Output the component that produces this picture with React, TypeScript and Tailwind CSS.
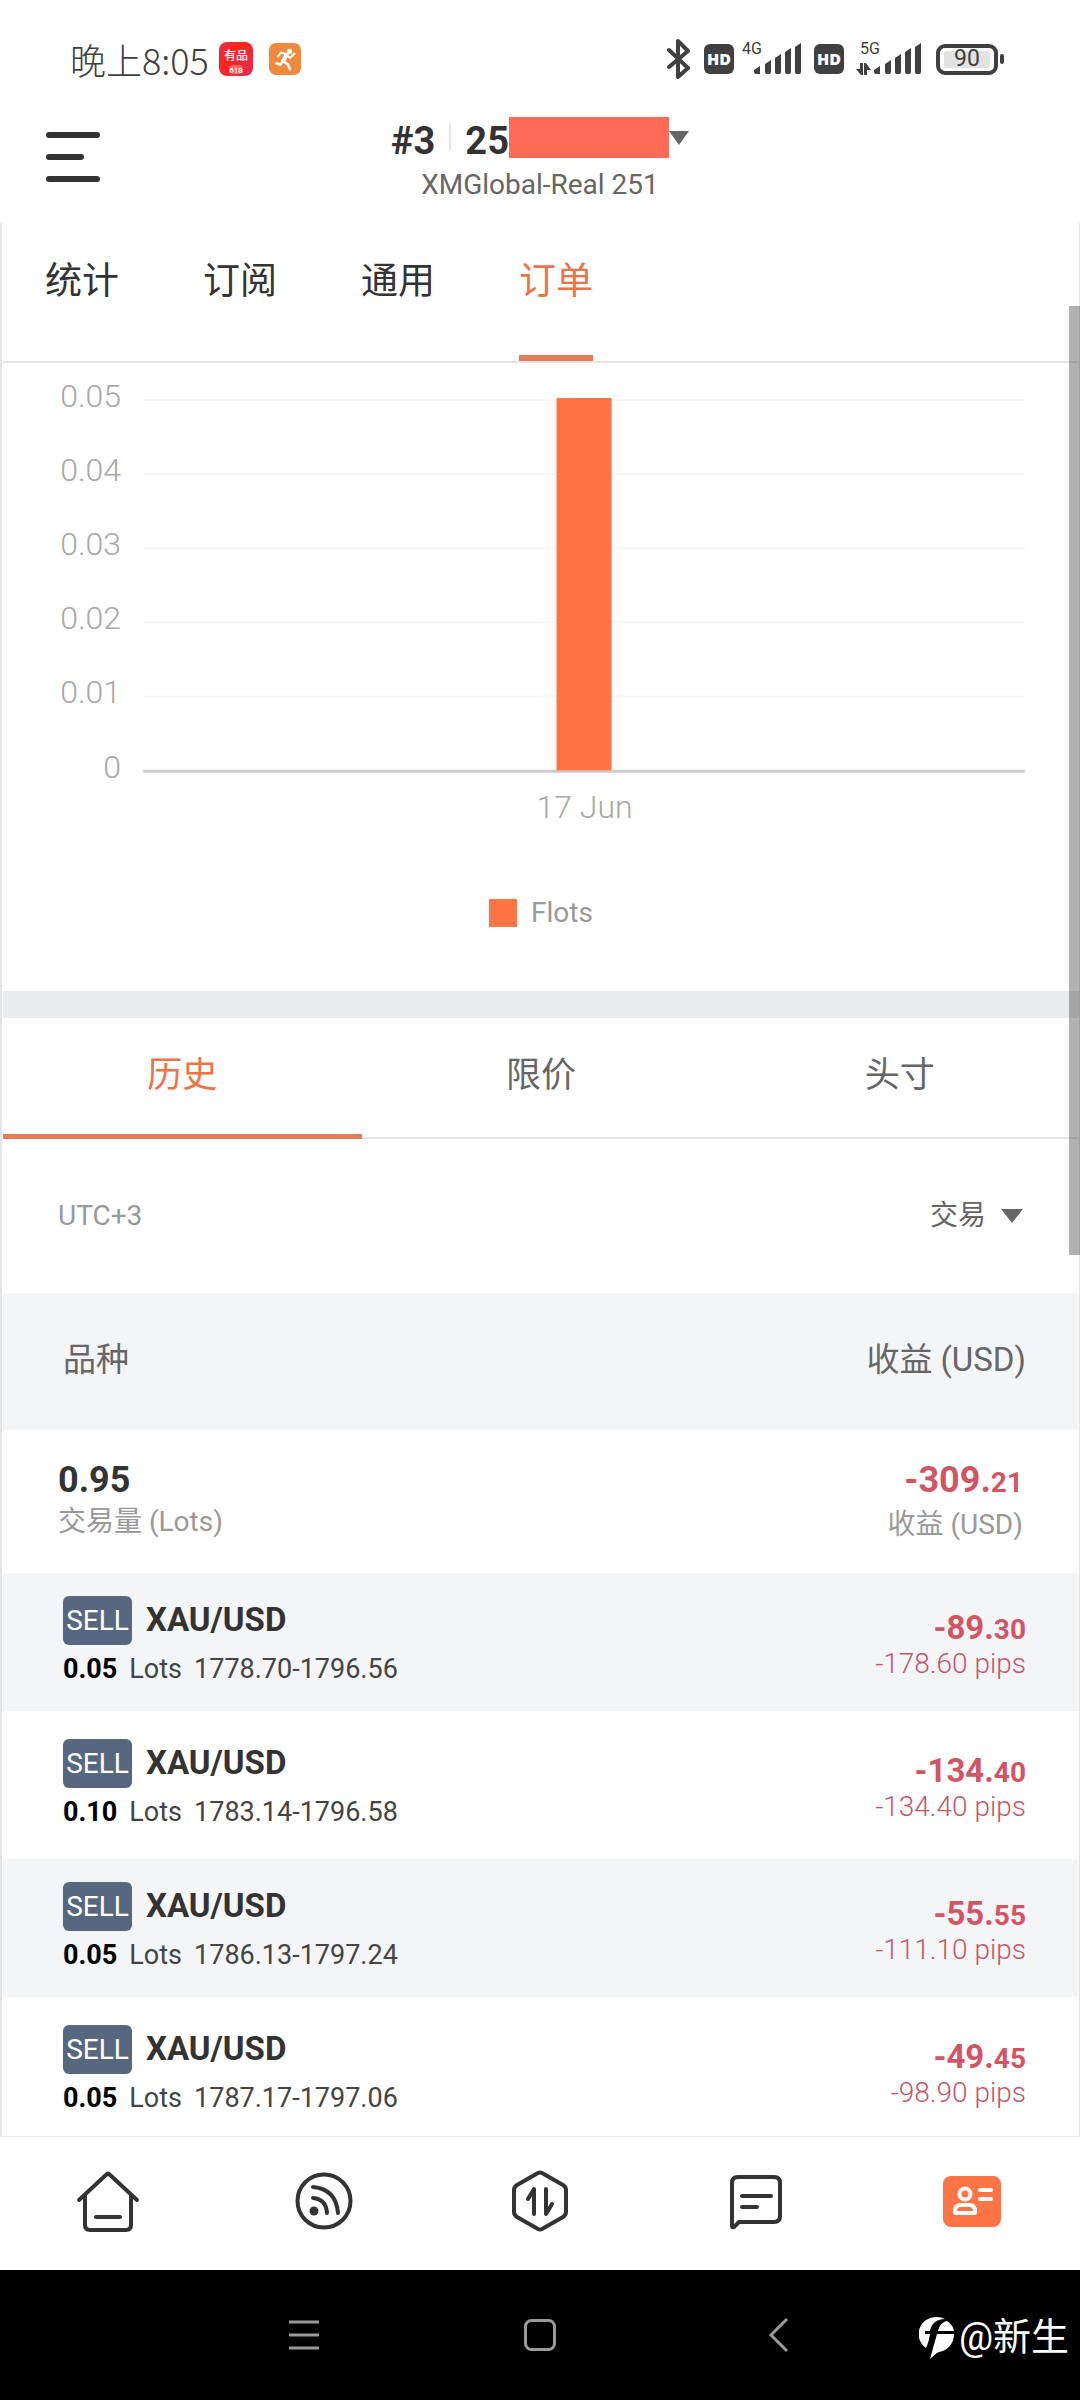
import React, { useState } from 'react';

interface Order {
    id: number;
    symbol: string;
    lots: string;
    range: string;
    whole: string;
    cents: string;
    pips: string;
}

const PAGE_TABS = ['统计', '订阅', '通用', '订单'];
const ORDER_TABS = ['历史', '限价', '头寸'];
const TICKS = ['0.05', '0.04', '0.03', '0.02', '0.01'];

const ORDERS: Order[] = [
    { id: 1, symbol: 'XAU/USD', lots: '0.05', range: '1778.70-1796.56', whole: '-89.', cents: '30', pips: '-178.60 pips' },
    { id: 2, symbol: 'XAU/USD', lots: '0.10', range: '1783.14-1796.58', whole: '-134.', cents: '40', pips: '-134.40 pips' },
    { id: 3, symbol: 'XAU/USD', lots: '0.05', range: '1786.13-1797.24', whole: '-55.', cents: '55', pips: '-111.10 pips' },
    { id: 4, symbol: 'XAU/USD', lots: '0.05', range: '1787.17-1797.06', whole: '-49.', cents: '45', pips: '-98.90 pips' },
];

const SignalBars = () => (
    <svg className="h-8 w-12" viewBox="0 0 48 32" fill="currentColor">
        <path d="M0 27l6-4v8H2q-2 0-2-2zM11 21l6-4v12q0 2-2 2h-2q-2 0-2-2zM21 15l6-4v18q0 2-2 2h-2q-2 0-2-2zM31 9l6-4v24q0 2-2 2h-2q-2 0-2-2zM41 4l6-4v29q0 2-2 2h-2q-2 0-2-2z" />
    </svg>
);

const HdBadge = () => (
    <span className="flex h-[30px] w-[30px] items-center justify-center rounded-md bg-[#404040] font-['Open_Sans'] text-base font-extrabold text-white">
        HD
    </span>
);

const StatusBar = () => (
    <div className="flex items-center justify-between pt-[39px] pr-[76px] pl-[70px] text-[#404040]">
        <div className="flex h-10 items-center">
            <span className="font-['Noto_Sans_CJK_SC'] text-[36px] leading-10 font-light">晚上8:05</span>
            <svg className="ml-2.5 h-[34px] w-[34px]" viewBox="0 0 34 34">
                <defs>
                    <linearGradient id="youpin" x1="0" y1="0" x2="1" y2="1">
                        <stop offset="0" stopColor="#e0325a" />
                        <stop offset="0.35" stopColor="#ff2418" />
                        <stop offset="1" stopColor="#e42a5c" />
                    </linearGradient>
                </defs>
                <rect width="34" height="34" rx="8" fill="url(#youpin)" />
                <rect x="10" y="23" width="14" height="9" rx="4" fill="#f8685c" />
                <text x="17" y="18" fontSize="12" fontWeight="500" textAnchor="middle" fill="#fff">有品</text>
                <text x="17" y="31" fontSize="8" fontWeight="500" textAnchor="middle" fill="#fff">618</text>
            </svg>
            <svg className="ml-4 h-8 w-8" viewBox="0 0 32 32" fill="none" stroke="#fff" strokeLinecap="round" strokeLinejoin="round">
                <rect width="32" height="32" rx="7" fill="#ee8a3e" stroke="none" />
                <circle cx="20.5" cy="8.5" r="2.7" fill="#fff" stroke="none" />
                <path d="M9 13.5l3-4 5 1.5 4 4 4.500-4.500" strokeWidth="2" />
                <path d="M17.500 12L14 18" strokeWidth="4" />
                <path d="M14 18l-2.500 3.500-4-1M14.500 18.500l4.500 3 2 5" strokeWidth="2.5" />
            </svg>
        </div>
        <div className="flex h-10 items-center">
            <svg className="h-10 w-[26px]" viewBox="0 0 26 40" fill="none" stroke="currentColor" strokeWidth="4" strokeLinecap="round" strokeLinejoin="round">
                <path d="M3 11l19 18-10 9V2l10 10L3 28" />
            </svg>
            <div className="ml-3">
                <HdBadge />
            </div>
            <div className="relative ml-5">
                <SignalBars />
                <span className="absolute -top-1 -left-3 text-base leading-5">4G</span>
            </div>
            <div className="ml-3">
                <HdBadge />
            </div>
            <div className="relative ml-3 flex items-end gap-[3px]">
                <svg className="h-3 w-[15px]" viewBox="0 0 15 12" fill="currentColor">
                    <path d="M4 0h3v12H5L0 6h4zM8 12h3V7h4L10 0H8z" />
                </svg>
                <SignalBars />
                <span className="absolute -top-1 left-1 text-base leading-5">5G</span>
            </div>
            <div className="ml-3.5 flex items-center gap-0.5">
                <span className="flex h-[31px] w-[62px] items-center justify-center rounded-[9px] border-4 border-[#404040]">
                    <span className="flex h-[17px] w-[46px] items-center justify-center rounded-xs bg-[#e2e2e2] text-[23px] leading-4">90</span>
                </span>
                <span className="h-[10px] w-1 rounded-full bg-[#404040]" />
            </div>
        </div>
    </div>
);

const Header = () => (
    <header className="grid grid-cols-[1fr_auto_1fr] items-start px-[46px] pb-[13px]">
        <button className="mt-[53px] w-[54px]" aria-label="menu">
            <svg className="h-[50px] w-[54px]" viewBox="0 0 54 50" stroke="#333" strokeWidth="6" strokeLinecap="round">
                <path d="M3 3h48M3 25h32M3 47h48" />
            </svg>
        </button>
        <button className="mt-[38px] text-[#333]">
            <span className="flex h-[41px] items-center text-[38px] leading-[41px] font-bold">
                <span className="pt-2">#3</span>
                <span className="mx-3.5 h-[27px] w-0.5 bg-[#e5e5e5]" />
                <span className="pt-2">25</span>
                <span className="h-[41px] w-40 bg-[#ff6a57]" />
                <svg className="h-3.5 w-5" viewBox="0 0 20 14" fill="#666">
                    <path d="M0 0h20L10 14z" />
                </svg>
            </span>
            <span className="block pt-0.5 text-[28px] leading-[50px] text-[#666]">XMGlobal-Real 251</span>
        </button>
    </header>
);

const LotsChart = () => (
    <svg className="block h-auto w-full" viewBox="0 0 1075 467" role="img" aria-label="Flots">
        {TICKS.map((tick, i) => (
            <g key={tick}>
                <path d={`M140 ${37 + i * 74}h881`} stroke="#f6f6f6" strokeWidth="2" />
                <text x="118" y={44 + i * 74} fontSize="32" fontWeight="300" textAnchor="end" fill="#a8a8a8">{tick}</text>
            </g>
        ))}
        <path d="M140 408h881" stroke="#ccc" strokeWidth="3" />
        <text x="118" y="415" fontSize="32" fontWeight="300" textAnchor="end" fill="#a8a8a8">0</text>
        <rect x="553" y="35" width="55" height="372" fill="#ff7445" />
        <text x="581" y="455" fontSize="32" fontWeight="300" textAnchor="middle" fill="#a8a8a8">17 Jun</text>
    </svg>
);

const OrderTable = () => (
    <table className="w-full border-separate border-spacing-0">
        <thead>
            <tr className="h-[137px] bg-[#f4f5f7] text-[33px] text-[#666]">
                <th scope="col" className="pb-1 pl-[60px] text-left font-normal">品种</th>
                <th scope="col" className="pr-[53px] pb-1 text-right font-normal">收益 (USD)</th>
            </tr>
        </thead>
        <tbody>
            <tr className="h-[143px] align-top text-[28px] leading-[42px] text-[#999]">
                <td className="pt-[29px] pl-[55px]">
                    <div className="text-[36px] font-bold text-[#333]">0.95</div>
                    <div>交易量 (Lots)</div>
                </td>
                <td className="pt-[29px] pr-14 text-right">
                    <div className="text-[36px] font-bold text-[#d35565]">
                        -309.<span className="text-[28px]">21</span>
                    </div>
                    <div>收益 (USD)</div>
                </td>
            </tr>
            {ORDERS.map((order) => (
                <tr key={order.id} className="group h-[143px] align-top odd:bg-white even:bg-[#f4f5f7] last:h-[134px]">
                    <td className="border-b-[5px] border-white pt-[23px] pl-[60px] group-last:border-b-0">
                        <div className="flex items-start gap-3.5">
                            <span className="flex h-[49px] w-[69px] items-center justify-center rounded-md bg-[#586780] text-[28px] text-white">SELL</span>
                            <span className="text-[33px] leading-[47px] font-bold text-[#333]">{order.symbol}</span>
                        </div>
                        <div className="flex gap-3 pt-px text-[27px] leading-[46px] text-[#444]">
                            <span className="font-bold text-black">{order.lots}</span>
                            <span>Lots</span>
                            <span>{order.range}</span>
                        </div>
                    </td>
                    <td className="border-b-[5px] border-white pt-[37px] pr-[53px] text-right leading-9 group-last:border-b-0">
                        <div className="text-[33px] leading-9 font-bold text-[#d35565]">
                            {order.whole}<span className="text-[28px]">{order.cents}</span>
                        </div>
                        <div className="text-[28px] leading-8 font-light text-[#c95468]">{order.pips}</div>
                    </td>
                </tr>
            ))}
        </tbody>
    </table>
);

const BottomNav = () => (
    <nav className="grid h-[134px] grid-cols-5 items-center justify-items-center border-t border-[#ebebeb] pb-1.5 text-[#333]">
        <button aria-label="home">
            <svg className="h-16 w-16" viewBox="0 0 64 64" fill="none" stroke="currentColor" strokeWidth="4" strokeLinecap="round" strokeLinejoin="round">
                <path d="M3 31L31 5q1-1 2 0l28 26M9 27v29q0 5 5 5h36q5 0 5-5V27M20 48h24" />
            </svg>
        </button>
        <button aria-label="signals">
            <svg className="h-16 w-16" viewBox="0 0 64 64" fill="none" stroke="currentColor" strokeWidth="4" strokeLinecap="round">
                <circle cx="32" cy="32" r="26.5" />
                <path d="M21 18q23 2 25 26M21 29q13 1 14 15" />
                <circle cx="22" cy="42" r="4.5" fill="currentColor" stroke="none" />
            </svg>
        </button>
        <button aria-label="trade">
            <svg className="h-16 w-16" viewBox="0 0 64 64" fill="none" stroke="currentColor" strokeWidth="4" strokeLinecap="round" strokeLinejoin="round">
                <path d="M30 4q2-1 4 0l21 12q3 2 3 5v22q0 3-3 5L34 60q-2 1-4 0L9 48q-3-2-3-5V21q0-3 3-5z" />
                <path d="M20 30l6-10v25M38 20v25l6-10" />
            </svg>
        </button>
        <button aria-label="messages">
            <svg className="h-16 w-16" viewBox="0 0 64 64" fill="none" stroke="currentColor" strokeWidth="4" strokeLinecap="round" strokeLinejoin="round">
                <path d="M8 57V14q0-6 6-6h36q6 0 6 6v33q0 6-6 6H15l-5 5q-2 1-2-1zM18 27h29M18 38h15" />
            </svg>
        </button>
        <button aria-label="account">
            <svg className="h-16 w-16" viewBox="0 0 64 64" fill="none" stroke="#fff" strokeWidth="4" strokeLinejoin="round">
                <rect x="3" y="7" width="58" height="51" rx="8" fill="#ff7445" stroke="none" />
                <circle cx="25" cy="25" r="5.5" />
                <path d="M15 44v-2q0-6 6-6h8q6 0 6 6v2z" />
                <path d="M40 21h11M40 30h11" strokeLinecap="round" />
            </svg>
        </button>
    </nav>
);

const SystemBar = () => (
    <div className="relative flex h-[130px] items-center justify-center gap-[202px] bg-black text-[#9a9a9a]">
        <button aria-label="recents">
            <svg className="h-9 w-9" viewBox="0 0 36 36" fill="none" stroke="currentColor" strokeWidth="3">
                <path d="M5 5h30M5 18h30M5 31h30" />
            </svg>
        </button>
        <button aria-label="system home">
            <svg className="h-9 w-9" viewBox="0 0 36 36" fill="none" stroke="currentColor" strokeWidth="3">
                <rect x="3.5" y="3.5" width="29" height="29" rx="6" />
            </svg>
        </button>
        <button aria-label="back">
            <svg className="h-9 w-9" viewBox="0 0 36 36" fill="none" stroke="currentColor" strokeWidth="3">
                <path d="M27 2L11 18l16 16" />
            </svg>
        </button>
        <div className="absolute top-11 right-[11px] flex items-end gap-1 text-white">
            <svg className="h-11 w-9" viewBox="0 0 36 44">
                <path d="M17 1a17 17 0 0 1 9 2C17 3 12 8 11 15H6v3h5c-1 6-2 10-4 14A17 17 0 0 1 17 1z" fill="#fff" />
                <path d="M28 5q6 4 7 10H19c1-5 4-9 9-10zM18 18h17c0 10-7 17-15 18-4 2-6 4-9 7z" fill="#fff" />
            </svg>
            <span className="text-[38px] leading-[46px]">@新生</span>
        </div>
    </div>
);

const App: React.FC = () => {
    const [pageTab, setPageTab] = useState('订单');
    const [orderTab, setOrderTab] = useState('历史');

    return (
        <div className="bg-white font-['Roboto','Noto_Sans_CJK_SC',sans-serif]">
            <StatusBar />
            <Header />

            <main className="relative border-r border-l-2 border-[#e5e5e5] pl-px">
                <div className="flex gap-[84px] border-b-2 border-[#e5e5e5] px-[42px] text-[37px] text-[#333]">
                    {PAGE_TABS.map((tab) => (
                        <button
                            key={tab}
                            onClick={() => setPageTab(tab)}
                            className={`border-b-[6px] pb-[14px] leading-[118px] ${pageTab === tab ? 'border-[#e37a58] text-[#ee7347]' : 'border-transparent'}`}
                        >
                            {tab}
                        </button>
                    ))}
                </div>

                <LotsChart />
                <div className="flex items-center justify-center gap-3.5 pt-[63px] pb-[58px] text-[28px] leading-10 text-[#999]">
                    <span className="h-7 w-7 bg-[#ff7445]" />
                    Flots
                </div>

                <div className="h-[27px] bg-[#ebecee]" />

                <div className="grid grid-cols-3 text-[35px] text-[#666]">
                    {ORDER_TABS.map((tab) => (
                        <button
                            key={tab}
                            onClick={() => setOrderTab(tab)}
                            className={`h-[121px] ${orderTab === tab ? 'border-b-[5px] border-[#e37a58] pb-px text-[#ee7347]' : 'border-b-2 border-[#e5e5e5] pb-1'}`}
                        >
                            {tab}
                        </button>
                    ))}
                </div>

                <div className="flex h-[154px] items-center justify-between pr-[56px] pl-[55px] text-[28px] text-[#999]">
                    <span>UTC+3</span>
                    <label className="flex items-center gap-3.5 text-[#666]">
                        <select className="appearance-none bg-transparent" aria-label="交易">
                            <option>交易</option>
                        </select>
                        <svg className="h-3.5 w-[22px]" viewBox="0 0 22 14" fill="currentColor">
                            <path d="M0 0h22L11 14z" />
                        </svg>
                    </label>
                </div>

                <OrderTable />

                {/* scroll thumb floating over the content */}
                <div className="absolute top-[83px] -right-px h-[949px] w-[11px] bg-black/30" />
            </main>

            <BottomNav />
            <SystemBar />
        </div>
    );
};

export default App;
